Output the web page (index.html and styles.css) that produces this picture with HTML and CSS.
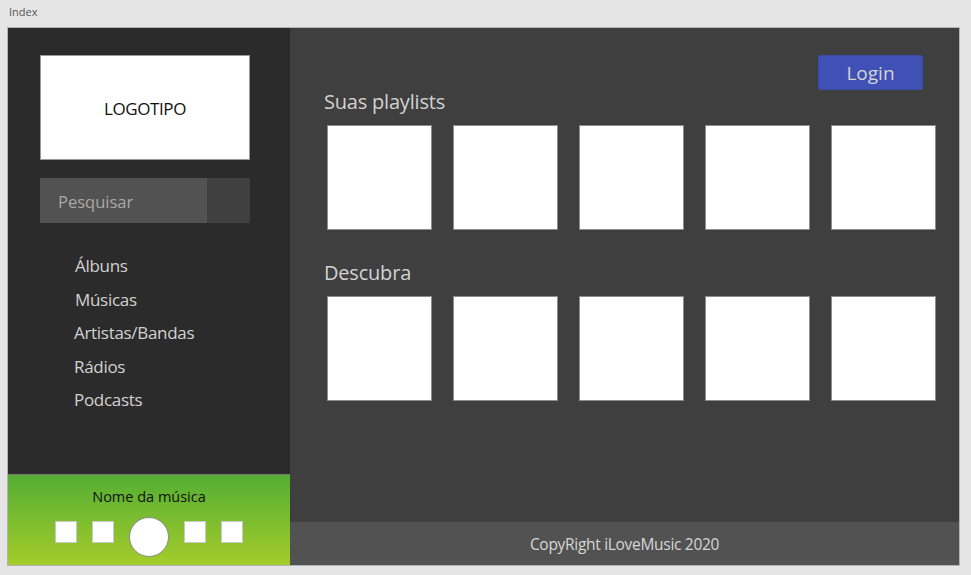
FILE: index.html
```html
<!DOCTYPE html>
<html lang="pt-BR">
<head>
<meta charset="utf-8">
<title>Index</title>
<link rel="stylesheet" href="styles.css">
</head>
<body>
<div class="page-label">Index</div>
<div class="frame">
  <aside class="sidebar">
    <div class="logo">LOGOTIPO</div>
    <div class="search">
      <div class="search-input">Pesquisar</div>
      <div class="search-btn"></div>
    </div>
    <nav class="nav">
      <a class="nav-item nudge">Álbuns</a>
      <a class="nav-item nudge">Músicas</a>
      <a class="nav-item">Artistas/Bandas</a>
      <a class="nav-item">Rádios</a>
      <a class="nav-item">Podcasts</a>
    </nav>
    <div class="player">
      <div class="track">Nome da música</div>
      <div class="controls">
        <span class="ctrl sq"></span>
        <span class="ctrl sq"></span>
        <span class="ctrl play"></span>
        <span class="ctrl sq"></span>
        <span class="ctrl sq"></span>
      </div>
    </div>
  </aside>
  <main class="main">
    <div class="content">
      <div class="topbar"><button class="login">Login</button></div>
      <h2 class="heading first">Suas playlists</h2>
      <div class="cards">
        <div class="card"></div><div class="card"></div><div class="card"></div><div class="card"></div><div class="card"></div>
      </div>
      <h2 class="heading">Descubra</h2>
      <div class="cards">
        <div class="card"></div><div class="card"></div><div class="card"></div><div class="card"></div><div class="card"></div>
      </div>
    </div>
    <footer class="footer">CopyRight iLoveMusic 2020</footer>
  </main>
</div>
</body>
</html>
```

FILE: styles.css
```css
* { box-sizing: border-box; }
html, body { margin: 0; padding: 0; }
body {
  background: #e5e5e5;
  font-family: "Open Sans", "Noto Sans", sans-serif;
  width: 971px;
  height: 575px;
  overflow: hidden;
}
.page-label {
  height: 27px;
  padding: 5px 0 0 9px;
  font-size: 11px;
  line-height: 14px;
  color: #555;
}
.frame {
  margin-left: 7px;
  width: 953px;
  height: 539px;
  border: 1px solid #b4b4b4;
  display: flex;
}
.sidebar {
  width: 282px;
  background: #2b2b2b;
  display: flex;
  flex-direction: column;
}
.logo {
  margin: 27px 0 0 32px;
  width: 210px;
  height: 105px;
  background: #fff;
  border: 1px solid #9a9a9a;
  display: flex;
  align-items: center;
  justify-content: center;
  font-size: 17px;
  color: #111;
  letter-spacing: -0.4px;
  padding-top: 2px;
}
.search {
  margin: 18px 0 0 32px;
  width: 210px;
  height: 45px;
  display: flex;
}
.search-input {
  width: 167px;
  background: #525252;
  color: #a9a9a9;
  font-size: 16.5px;
  line-height: 47px;
  padding-left: 18px;
}
.search-btn {
  flex: 1;
  background: #404040;
}
.nav {
  margin-top: 26px;
  padding-left: 66px;
  display: flex;
  flex-direction: column;
}
.nav-item {
  color: #d2d2d2;
  font-size: 17px;
  line-height: 33.6px;
  letter-spacing: -0.3px;
}
.nudge { padding-left: 1px; }
.player {
  margin-top: auto;
  height: 91px;
  border-top: 1px solid #7a7a7a;
  background: linear-gradient(#54ae34, #a4cc2a);
  display: flex;
  flex-direction: column;
  align-items: center;
}
.track {
  margin-top: 12px;
  font-size: 14.5px;
  line-height: 20px;
  color: #111;
}
.controls {
  margin-top: 10px;
  display: flex;
  align-items: flex-start;
  gap: 15px;
}
.ctrl {
  display: block;
  background: #fff;
  border: 1px solid #c8c8c8;
}
.sq { width: 22px; height: 22px; margin-top: 4px; }
.play {
  width: 40px;
  height: 40px;
  border-radius: 50%;
  border-color: #8a8a8a;
}
.main {
  flex: 1;
  background: #3f3f3f;
  display: flex;
  flex-direction: column;
}
.content {
  flex: 1;
  padding: 27px 0 0 34px;
}
.topbar {
  display: flex;
  justify-content: flex-end;
  padding-right: 36px;
}
.login {
  width: 105px;
  height: 35px;
  background: #3f51b5;
  border: 1px solid #3a4aa8;
  border-radius: 2px;
  color: #d4d4d4;
  font-family: inherit;
  font-size: 19px;
  padding: 0;
}
.heading {
  margin: 31px 0 11px;
  font-weight: normal;
  font-size: 20px;
  line-height: 24px;
  color: #d2d2d2;
  letter-spacing: -0.2px;
}
.heading.first { margin-top: 0; }
.cards {
  display: flex;
  gap: 21px;
  margin-left: 3px;
}
.card {
  width: 105px;
  height: 105px;
  background: #fff;
  border: 1px solid #8c8c8c;
}
.footer {
  height: 43px;
  background: #525252;
  color: #d6d6d6;
  font-size: 15.5px;
  display: flex;
  align-items: center;
  justify-content: center;
  letter-spacing: -0.3px;
}
```
